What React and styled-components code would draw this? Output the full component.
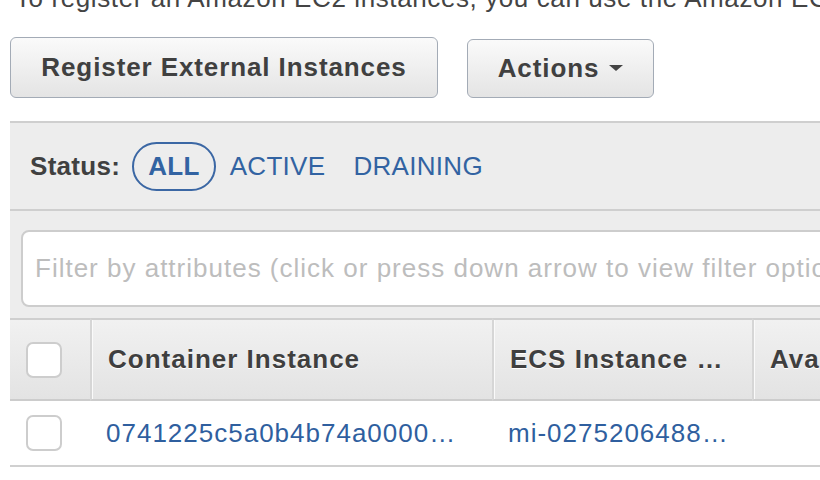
import React from "react"
import styled, { createGlobalStyle } from "styled-components"

const GlobalStyle = createGlobalStyle`
  html, body {
    margin: 0;
    padding: 0;
    background: #fff;
    overflow: hidden;
  }
  body {
    font-family: "Liberation Sans", Arial, Helvetica, sans-serif;
    color: #444;
  }
`

const Page = styled.div`
  width: 820px;
  height: 480px;
  overflow: hidden;
  padding-left: 10px;
  box-sizing: border-box;
`

const Intro = styled.p`
  margin: -17px 0 0 5px;
  font-size: 26px;
  line-height: 30px;
  letter-spacing: 0.6px;
  color: #444;
  white-space: nowrap;
`

const Toolbar = styled.div`
  display: flex;
  align-items: flex-end;
  gap: 29px;
  margin-top: 24px;
`

const Button = styled.button`
  display: flex;
  align-items: center;
  justify-content: center;
  gap: 10px;
  width: ${(p) => p.$width}px;
  height: ${(p) => p.$height}px;
  padding: 0;
  border: 1px solid #a3abb6;
  border-radius: 6px;
  background: linear-gradient(#fafafa, #e4e4e4);
  font-family: inherit;
  font-size: 26px;
  font-weight: bold;
  letter-spacing: 0.9px;
  color: #404040;
  box-sizing: border-box;
`

const Caret = styled.span`
  width: 0;
  height: 0;
  border-left: 7px solid transparent;
  border-right: 7px solid transparent;
  border-top: 6px solid #444;
  margin-top: -2px;
`

const Panel = styled.div`
  margin-top: 23px;
  width: 900px;
  border-top: 2px solid #cfcfcf;
  background: #ededed;
`

const StatusBar = styled.div`
  display: flex;
  align-items: center;
  height: 86px;
  padding-left: 20px;
  border-bottom: 2px solid #cfcfcf;
`

const StatusLabel = styled.span`
  font-size: 26px;
  font-weight: bold;
  letter-spacing: 0.3px;
  color: #404040;
  margin-right: 12px;
`

const StatusTab = styled.span`
  display: flex;
  align-items: center;
  height: 49px;
  padding: 0 ${(p) => (p.$active ? 14 : 12)}px;
  border: 2px solid ${(p) => (p.$active ? "#3b67a4" : "transparent")};
  border-radius: 25px;
  box-sizing: border-box;
  font-size: 26px;
  font-weight: ${(p) => (p.$active ? "bold" : "normal")};
  letter-spacing: 0.3px;
  color: #3263a2;
`

const FilterArea = styled.div`
  padding: 19px 0 11px 11px;
`

const FilterInput = styled.div`
  display: flex;
  align-items: center;
  height: 77px;
  padding-left: 12px;
  border: 2px solid #cdcdcd;
  border-radius: 8px;
  background: #fff;
  box-sizing: border-box;
  font-size: 26px;
  letter-spacing: 1px;
  color: #bdbdbd;
  white-space: nowrap;
  overflow: hidden;
`

const Grid = styled.div`
  display: grid;
  grid-template-columns: 80px 402px 260px 1fr;
`

const HeadCell = styled.div`
  display: flex;
  align-items: center;
  height: 79px;
  padding-left: 16px;
  border-top: 2px solid #cfcfcf;
  border-bottom: 2px solid #cccccc;
  border-left: ${(p) => (p.$check ? "none" : "2px solid #d6d6d6")};
  box-shadow: ${(p) => (p.$check ? "none" : "inset 1px 0 0 #fafafa")};
  background: linear-gradient(#f1f1f1, #e3e3e3);
  font-size: 26px;
  font-weight: bold;
  letter-spacing: 1px;
  color: #3f3f3f;
  text-shadow: 0 1px 0 #fff;
  white-space: nowrap;
  overflow: hidden;
`

const BodyCell = styled.div`
  display: flex;
  align-items: center;
  height: 64px;
  padding-left: 16px;
  border-bottom: 2px solid #d0d0d0;
  background: #fff;
  font-size: 26px;
  letter-spacing: 1px;
  color: #2f5f9f;
  white-space: nowrap;
  overflow: hidden;
`

const Checkbox = styled.span`
  display: block;
  width: 36px;
  height: 36px;
  border: 2px solid #cdcdcd;
  border-radius: 7px;
  background: #fff;
  box-sizing: border-box;
`

const columns = ["Container Instance", "ECS Instance …", "Ava"]

const rows = [
  { id: "0741225c5a0b4b74a0000…", ecs: "mi-0275206488…", avail: "" },
]

export default function App() {
  return (
    <Page>
      <GlobalStyle />
      <Intro>
        To register an Amazon EC2 instances, you can use the Amazon EC2 console
      </Intro>
      <Toolbar>
        <Button $width={428} $height={61}>Register External Instances</Button>
        <Button $width={187} $height={59}>
          Actions <Caret />
        </Button>
      </Toolbar>
      <Panel>
        <StatusBar>
          <StatusLabel>Status:</StatusLabel>
          <StatusTab $active>ALL</StatusTab>
          <StatusTab>ACTIVE</StatusTab>
          <StatusTab>DRAINING</StatusTab>
        </StatusBar>
        <FilterArea>
          <FilterInput>
            Filter by attributes (click or press down arrow to view filter options)
          </FilterInput>
        </FilterArea>
        <Grid>
          <HeadCell $check>
            <Checkbox />
          </HeadCell>
          {columns.map((c) => (
            <HeadCell key={c}>{c}</HeadCell>
          ))}
          {rows.map((r) => (
            <React.Fragment key={r.id}>
              <BodyCell $check>
                <Checkbox />
              </BodyCell>
              <BodyCell>{r.id}</BodyCell>
              <BodyCell>{r.ecs}</BodyCell>
              <BodyCell>{r.avail}</BodyCell>
            </React.Fragment>
          ))}
        </Grid>
      </Panel>
    </Page>
  )
}
